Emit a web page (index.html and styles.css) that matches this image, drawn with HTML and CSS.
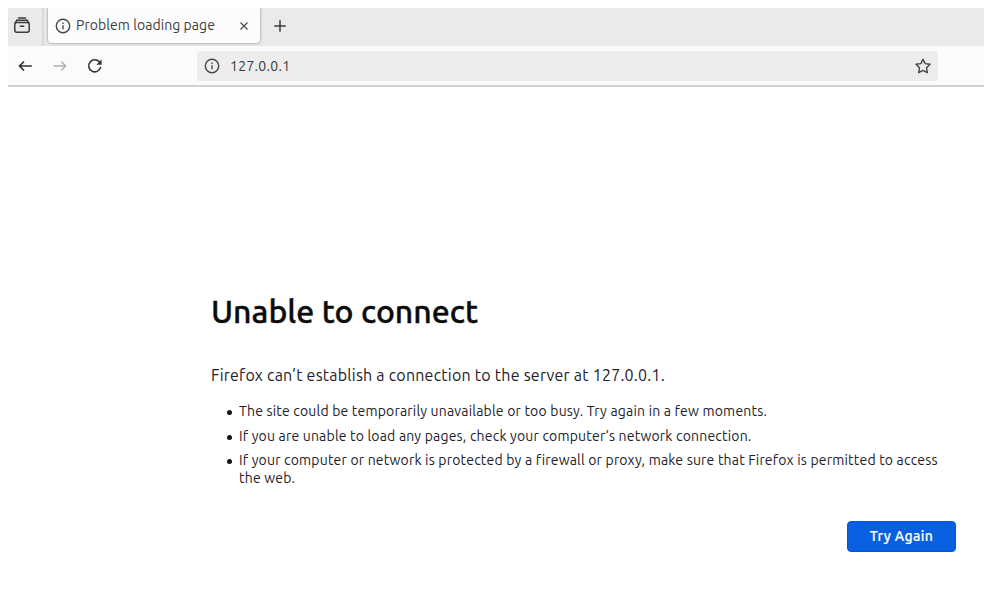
FILE: index.html
```html
<!DOCTYPE html>
<html lang="en">
<head>
<meta charset="utf-8">
<title>Problem loading page</title>
<link rel="stylesheet" href="styles.css">
</head>
<body>
<div class="window">
  <header class="tabbar">
    <div class="history">
      <svg width="18" height="18" viewBox="0 0 18 18" fill="none" stroke="#3c3c3c" stroke-width="1.5" stroke-linecap="round" stroke-linejoin="round"><path d="M5.500 1.900h7M3.800 4.300h10.400"/><rect x="1.800" y="6.400" width="14.400" height="9.800" rx="2"/><path d="M7.300 10.200h3.400M2.300 6.600l1.500-2.300M15.700 6.600l-1.500-2.300"/></svg>
    </div>
    <div class="tab">
      <svg width="16" height="16" viewBox="0 0 16 16" fill="none" stroke="#484848" stroke-width="1.4"><circle cx="8" cy="8" r="6.7"/><path d="M8 7.200v4M8 4.500v1.500"/></svg>
      <span class="tab-title">Problem loading page</span>
      <svg class="close" width="10" height="10" viewBox="0 0 10 10" stroke="#505050" stroke-width="1.3"><path d="M1.500 1.500l7 7M8.500 1.500l-7 7"/></svg>
    </div>
    <svg class="plus" width="14" height="14" viewBox="0 0 14 14" stroke="#3c3c3c" stroke-width="1.5"><path d="M7 1.200v11.600M1.200 7h11.600"/></svg>
  </header>
  <nav class="toolbar">
    <svg class="back" width="16" height="14" viewBox="0 0 16 14" fill="none" stroke="#303030" stroke-width="1.7" stroke-linecap="round" stroke-linejoin="round"><path d="M13.200 7H1.500M5.500 3L1.500 7l4 4"/></svg>
    <svg class="forward" width="16" height="14" viewBox="0 0 16 14" fill="none" stroke="#b0b0b0" stroke-width="1.4" stroke-linecap="round" stroke-linejoin="round"><path d="M2 7h11.700M9.700 3l4 4-4 4"/></svg>
    <svg class="reload" width="16" height="16" viewBox="0 0 16 16" fill="none" stroke="#333" stroke-width="1.6" stroke-linecap="round"><path d="M12.400 4A6 6 0 1 0 13.500 9.600"/><path d="M14.600 1.500v5.200H9.400z" fill="#333" stroke="none"/></svg>
    <div class="urlbar">
      <svg width="16" height="16" viewBox="0 0 16 16" fill="none" stroke="#484848" stroke-width="1.4"><circle cx="8" cy="8" r="6.700"/><path d="M8 7.200v4M8 4.500v1.500"/></svg>
      <span class="url">127.0.0.1</span>
      <svg class="star" width="16" height="16" viewBox="0 0 16 16" fill="none" stroke="#444" stroke-width="1.4" stroke-linejoin="round"><path d="M8 1.200l2.100 4.400 4.900.7-3.500 3.400.8 5-4.300-2.300-4.300 2.300.8-5L1 6.300l4.900-.7z"/></svg>
    </div>
  </nav>
  <main class="content">
    <h1>Unable to connect</h1>
    <p class="summary">Firefox can’t establish a connection to the server at 127.0.0.1.</p>
    <ul>
      <li>The site could be temporarily unavailable or too busy. Try again in a few moments.</li>
      <li>If you are unable to load any pages, check your computer’s network connection.</li>
      <li>If your computer or network is protected by a firewall or proxy, make sure that Firefox is permitted to access<br>the web.</li>
    </ul>
    <button class="retry">Try Again</button>
  </main>
</div>
</body>
</html>
```
FILE: styles.css
```css
* { box-sizing: border-box; }
body { margin: 0; padding: 8px 4px 0 8px; background: #fff; color: #22212a; font-family: Ubuntu, "Noto Sans", sans-serif; }
svg { display: block; flex: none; }
.tabbar { display: flex; align-items: flex-start; height: 38px; background: #eaeaea; }
.history { width: 36px; height: 38px; padding: 8px 0 0 5px; border-right: 2px solid #d9d9d9; }
.tab { display: flex; align-items: center; width: 212px; height: 35px; margin-left: 4px; padding: 0 11px 0 7px; background: #fcfcfc; border-radius: 0 0 4px 4px; box-shadow: 0 0 3px rgba(0, 0, 0, .45); clip-path: inset(0 -4px -4px -4px); }
.tab-title { margin-left: 5px; font-size: 14px; letter-spacing: .06px; line-height: 18px; padding-bottom: 1px; white-space: nowrap; color: #3c3c3c; }
.close { margin-left: auto; }
.plus { margin: 11px 0 0 13px; }
.toolbar { display: flex; align-items: center; height: 41px; padding: 0 46px 0 10px; background: #fbfbfb; border-bottom: 2px solid #d2d2d2; }
.forward { margin-left: 18px; }
.reload { margin-left: 19px; }
.urlbar { display: flex; align-items: center; flex: 1; height: 30px; margin-left: 94px; padding: 0 7px; background: #ededed; border-radius: 2px; }
.url { margin-left: 10px; font-size: 14px; letter-spacing: .3px; color: #383838; }
.star { margin-left: auto; }
.content { display: flex; flex-direction: column; width: 745px; margin-left: 203px; padding-top: 200px; }
h1 { margin: 0; font-size: 32px; font-weight: 500; line-height: 48px; white-space: nowrap; color: #0c0c0d; -webkit-text-stroke: .4px #0c0c0d; }
.summary { margin: 28px 0 0; font-size: 16px; line-height: 24px; letter-spacing: .23px; white-space: nowrap; }
ul { display: grid; gap: 6.5px; margin: 15px 0 0; padding: 0; list-style: none; font-size: 14px; line-height: 18px; letter-spacing: .19px; }
li { padding-left: 28px; white-space: nowrap; }
li::before { content: ""; float: left; width: 5px; height: 5px; margin: 8px 0 0 -12px; border-radius: 50%; background: #15141a; }
.retry { align-self: flex-end; width: 109px; height: 31px; margin-top: 34px; padding: 0; border: 1px solid #0757d0; border-radius: 4px; background: #0860e0; color: #fff; font: 500 14px/29px Ubuntu, "Noto Sans", sans-serif; letter-spacing: .35px; -webkit-text-stroke: .2px #fff; }
```
